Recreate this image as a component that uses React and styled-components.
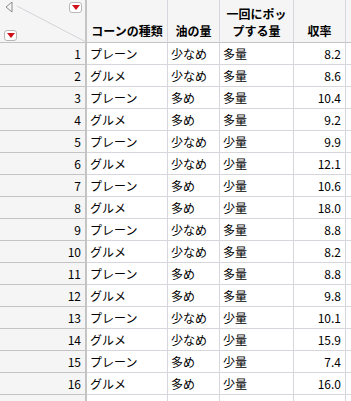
import React from 'react';
import styled, {createGlobalStyle} from 'styled-components';

const rows = [
    ['プレーン', '少なめ', '多量', '8.2'],
    ['グルメ', '少なめ', '多量', '8.6'],
    ['プレーン', '多め', '多量', '10.4'],
    ['グルメ', '多め', '多量', '9.2'],
    ['プレーン', '少なめ', '少量', '9.9'],
    ['グルメ', '少なめ', '少量', '12.1'],
    ['プレーン', '多め', '少量', '10.6'],
    ['グルメ', '多め', '少量', '18.0'],
    ['プレーン', '少なめ', '多量', '8.8'],
    ['グルメ', '少なめ', '多量', '8.2'],
    ['プレーン', '多め', '多量', '8.8'],
    ['グルメ', '多め', '多量', '9.8'],
    ['プレーン', '少なめ', '少量', '10.1'],
    ['グルメ', '少なめ', '少量', '15.9'],
    ['プレーン', '多め', '少量', '7.4'],
    ['グルメ', '多め', '少量', '16.0'],
];

const RedMenu = () => (
    <MenuBox>
        <svg width="8" height="5" viewBox="0 0 8 5">
            <polygon points="0,0 8,0 4,5" fill="#d0101a"/>
        </svg>
    </MenuBox>
);

const App = () => {
    return (
        <>
            <GlobalStyle/>
            <Sheet>
                <Corner>
                    <svg width="87" height="43" viewBox="0 0 87 43">
                        <line x1="17" y1="6" x2="86" y2="42" stroke="#d4d4da" strokeWidth="1"/>
                        <polyline points="12,2 6,7 12,12" fill="none" stroke="#8a8a8a" strokeWidth="1"/>
                        <line x1="12" y1="2" x2="12" y2="12" stroke="#8a8a8a" strokeWidth="1"/>
                    </svg>
                    <TopMenu><RedMenu/></TopMenu>
                    <SideMenu><RedMenu/></SideMenu>
                </Corner>
                <HeadCell>コーンの種類</HeadCell>
                <HeadCell>油の量</HeadCell>
                <HeadCell>一回にポッ<br/>プする量</HeadCell>
                <HeadCell>収率</HeadCell>
                <HeadFill/>
                {rows.map((r, i) => (
                    <React.Fragment key={i}>
                        <RowHead>{i + 1}</RowHead>
                        <Cell>{r[0]}</Cell>
                        <Cell>{r[1]}</Cell>
                        <Cell>{r[2]}</Cell>
                        <Cell $num>{r[3]}</Cell>
                        <Fill/>
                    </React.Fragment>
                ))}
                <RowHead/>
                <Cell/>
                <Cell/>
                <Cell/>
                <Cell/>
                <Fill/>
            </Sheet>
        </>
    )
}

const GlobalStyle = createGlobalStyle`
  body {
    margin: 0;
    background: #fff;
    font-family: "Noto Sans CJK JP", "Noto Sans", sans-serif;
    overflow: hidden;
  }
`;

const Sheet = styled.div`
  display: grid;
  grid-template-columns: 87px 81px 52px 74px 52px 1fr;
  grid-template-rows: 43px repeat(17, 22px);
  width: 351px;
  height: 401px;
  overflow: hidden;
  font-size: 12px;
  color: #000;
`;

const Corner = styled.div`
  position: relative;
  background: #f5f5f5;
  border-right: 2px solid #c4c4c4;
  border-bottom: 1px solid #c4c4c4;
  box-sizing: border-box;

  svg {
    display: block;
  }
`;

const TopMenu = styled.div`
  position: absolute;
  left: 69px;
  top: 2px;
`;

const SideMenu = styled.div`
  position: absolute;
  left: 4px;
  top: 30px;
`;

const MenuBox = styled.div`
  width: 11px;
  height: 9px;
  border: 1px solid #b8b8b8;
  border-radius: 3px;
  background: #fff;
  display: flex;
  align-items: center;
  justify-content: center;
`;

const HeadCell = styled.div`
  background: #f5f5f5;
  border-right: 1px solid #d6d6dc;
  border-bottom: 1px solid #c4c4c4;
  box-sizing: border-box;
  display: flex;
  align-items: flex-end;
  justify-content: center;
  text-align: center;
  font-weight: bold;
  line-height: 17px;
  padding-bottom: 3px;
  white-space: nowrap;
`;

const HeadFill = styled.div`
  background: #f5f5f5;
  border-bottom: 1px solid #c4c4c4;
`;

const RowHead = styled.div`
  background: #f5f5f5;
  border-right: 2px solid #c4c4c4;
  border-bottom: 1px solid #c4c4c4;
  box-sizing: border-box;
  text-align: right;
  padding-right: 4px;
  line-height: 21px;
`;

const Cell = styled.div`
  border-right: 1px solid #d6d6dc;
  border-bottom: 1px solid #d6d6dc;
  box-sizing: border-box;
  line-height: 21px;
  white-space: nowrap;
  overflow: hidden;
  text-align: ${p => (p.$num ? 'right' : 'left')};
  padding: ${p => (p.$num ? '0 4px 0 0' : '0 0 0 3px')};
`;

const Fill = styled.div`
  border-bottom: 1px solid #d6d6dc;
`;

export default App;
